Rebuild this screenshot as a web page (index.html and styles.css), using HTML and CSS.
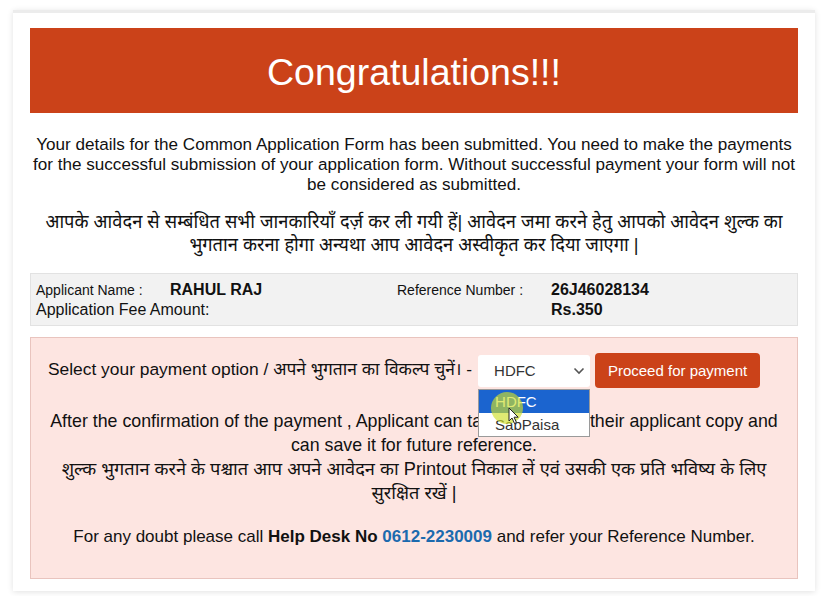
FILE: index.html
```html
<!DOCTYPE html>
<html>
<head>
<meta charset="utf-8">
<link rel="stylesheet" href="styles.css">
</head>
<body>
<div class="card">
  <div class="banner">Congratulations!!!</div>
  <p class="intro">Your details for the Common Application Form has been submitted. You need to make the payments for the successful submission of your application form. Without successful payment your form will not be considered as submitted.</p>
  <p class="intro-hi">आपके आवेदन से सम्बंधित सभी जानकारियाँ दर्ज़ कर ली गयी हें| आवेदन जमा करने हेतु आपको आवेदन शुल्क का भुगतान करना होगा अन्यथा आप आवेदन अस्वीकृत कर दिया जाएगा |</p>
  <div class="info">
    <div class="info-row">
      <span class="lbl small w1">Applicant Name :</span><span class="val w2">RAHUL RAJ</span>
      <span class="lbl small w3">Reference Number :</span><span class="val">26J46028134</span>
    </div>
    <div class="info-row">
      <span class="lbl w13">Application Fee Amount:</span><span class="val">Rs.350</span>
    </div>
  </div>
  <div class="pay">
    <div class="pay-row">
      <span class="pay-label">Select your payment option / अपने भुगतान का विकल्प चुनें। -</span>
      <div class="select-wrap">
        <div class="select">
          <span>HDFC</span>
          <svg class="chev" width="12" height="8" viewBox="0 0 12 8"><path d="M1.5 1.5 L6 6 L10.5 1.5" fill="none" stroke="#555" stroke-width="1.6"/></svg>
        </div>
        <div class="dropdown">
          <div class="opt active">HDFC</div>
          <div class="opt">SabPaisa</div>
          <div class="halo"></div>
          <svg class="cursor" width="12" height="18" viewBox="0 0 12 18"><path d="M1 1 L1 14 L4 11 L6.5 16.5 L8.5 15.5 L6 10.2 L10.2 10.2 Z" fill="#fff" stroke="#222" stroke-width="1"/></svg>
        </div>
      </div>
      <button class="proceed">Proceed for payment</button>
    </div>
    <p class="after">After the confirmation of the payment , Applicant can take printout of their applicant copy and can save it for future reference.<br><span class="after-hi">शुल्क भुगतान करने के पश्चात आप अपने आवेदन का Printout निकाल लें एवं उसकी एक प्रति भविष्य के लिए सुरक्षित रखें |</span></p>
    <p class="help">For any doubt please call <b>Help Desk No</b> <span class="phone">0612-2230009</span> and refer your Reference Number.</p>
  </div>
</div>
</body>
</html>
```
FILE: styles.css
```css
html, body {
  margin: 0;
  padding: 0;
  background: #ffffff;
}
body {
  font-family: "Liberation Sans", Arial, "Noto Sans Devanagari", sans-serif;
  color: #111;
  padding: 10px 21px 5px 13px;
}
.card {
  background: #fff;
  border-top: 3px solid #ececec;
  box-shadow: 0 1px 6px rgba(0,0,0,0.12);
  padding: 15px 17px 12px 17px;
}
.banner {
  background: #cb4219;
  color: #fff;
  height: 85px;
  line-height: 88px;
  text-align: center;
  font-size: 37.5px;
}
.intro {
  margin: 22px 0 0 0;
  text-align: center;
  font-size: 17.1px;
  line-height: 20px;
}
.intro-hi {
  margin: 15px 0 0 0;
  text-align: center;
  font-size: 18.3px;
  line-height: 23px;
  padding: 0 6px;
}
.info {
  margin-top: 17px;
  background: #f2f2f2;
  border: 1px solid #e2e2e2;
  padding: 6px 5px 6px 5px;
}
.info-row {
  display: flex;
  align-items: baseline;
  line-height: 19px;
}
.lbl { font-size: 16px; }
.lbl.small { font-size: 14px; }
.val { font-size: 16px; font-weight: bold; }
.w1 { width: 134px; }
.w2 { width: 227px; }
.w3 { width: 154px; }
.w13 { width: 515px; }
.pay {
  margin-top: 11px;
  background: #fde5e1;
  border: 1px solid #e9c4be;
  padding: 15px 8px 29px 8px;
  text-align: center;
}
.pay-row {
  display: flex;
  align-items: center;
  justify-content: center;
  padding-right: 20px;
}
.pay-label {
  font-size: 17.4px;
  margin-right: 6px;
  white-space: nowrap;
}
.select-wrap {
  position: relative;
}
.select {
  width: 112px;
  height: 32px;
  box-sizing: border-box;
  background: #fff;
  border-radius: 3px;
  display: flex;
  align-items: center;
  justify-content: space-between;
  padding: 0 5px 0 16px;
  font-size: 15px;
  color: #333;
}
.chev { display: block; }
.dropdown {
  position: absolute;
  left: 0;
  top: 34px;
  width: 112px;
  background: #fff;
  border: 1px solid #9a9a9a;
  box-sizing: border-box;
  text-align: left;
  font-size: 15px;
  z-index: 5;
}
.opt {
  height: 23px;
  line-height: 23px;
  padding-left: 16px;
  color: #333;
}
.opt.active {
  background: #1b64cf;
  color: #fff;
}
.halo {
  position: absolute;
  left: 12px;
  top: 2px;
  width: 32px;
  height: 32px;
  border-radius: 50%;
  background: rgba(206, 222, 40, 0.65);
}
.cursor {
  position: absolute;
  left: 29px;
  top: 17px;
}
.proceed {
  margin-left: 5px;
  width: 165px;
  height: 35px;
  background: #cb4219;
  color: #fff;
  border: none;
  border-radius: 4px;
  font-family: "Liberation Sans", Arial, sans-serif;
  font-size: 15px;
}
.after {
  margin: 21px 0 0 0;
  font-size: 17.8px;
  line-height: 24px;
}
.after-hi {
  font-size: 18.2px;
}
.help {
  margin: 20px 0 0 0;
  font-size: 17px;
  line-height: 24px;
}
.phone { color: #1b6aae; font-weight: bold; }
```
